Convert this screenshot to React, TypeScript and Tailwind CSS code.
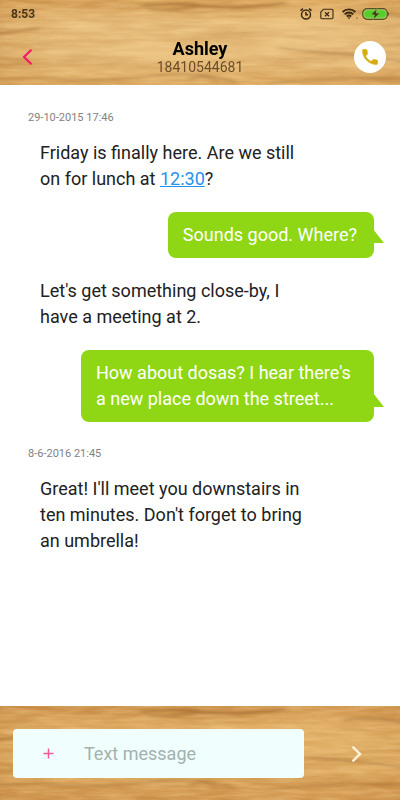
import React, { FormEvent, ReactNode, useState } from 'react';

const Wood = ({ id, light, dark }: { id: string; light: string; dark: string }) => (
  <svg
    className="absolute inset-0 h-full w-full"
    viewBox="0 0 400 94"
    preserveAspectRatio="xMidYMin slice"
    aria-hidden="true"
  >
    <defs>
      <linearGradient id={`${id}-base`} x1="0" x2="0" y1="0" y2="1">
        <stop offset="0" stopColor={dark} />
        <stop offset="0.25" stopColor={light} />
        <stop offset="0.6" stopColor={light} />
        <stop offset="1" stopColor={dark} />
      </linearGradient>
      <linearGradient id={`${id}-side`}>
        <stop offset="0" stopColor="#b97c35" stopOpacity="0.35" />
        <stop offset="0.15" stopColor="#c98d45" stopOpacity="0" />
        <stop offset="0.85" stopColor="#c98d45" stopOpacity="0" />
        <stop offset="1" stopColor="#b97c35" stopOpacity="0.15" />
      </linearGradient>
      <filter id={`${id}-grain`} x="0" y="0" width="100%" height="100%" colorInterpolationFilters="sRGB">
        <feTurbulence type="fractalNoise" baseFrequency="0.008 0.07" numOctaves="5" seed="8" />
        <feColorMatrix values="0 0 0 0 0.68  0 0 0 0 0.43  0 0 0 0 0.16  0.7 0 0 0 -0.25" />
      </filter>
      <filter id={`${id}-shine`} x="0" y="0" width="100%" height="100%" colorInterpolationFilters="sRGB">
        <feTurbulence type="fractalNoise" baseFrequency="0.03 0.25" numOctaves="4" seed="3" />
        <feColorMatrix values="0 0 0 0 1  0 0 0 0 0.88  0 0 0 0 0.64  0.6 0 0 0 -0.2" />
      </filter>
      <filter id={`${id}-soft`} x="-20%" y="-100%" width="140%" height="300%">
        <feGaussianBlur stdDeviation="3 1" />
      </filter>
    </defs>
    <rect width="400" height="94" fill={`url(#${id}-base)`} />
    <rect width="400" height="94" fill={`url(#${id}-side)`} />
    <rect width="400" height="94" filter={`url(#${id}-grain)`} />
    <rect width="400" height="94" filter={`url(#${id}-shine)`} />
    <g filter={`url(#${id}-soft)`} fill="none" stroke="#8a5424" strokeLinecap="round">
      <path d="M142 6 Q175 2 205 6 T285 3" strokeWidth="3" opacity="0.4" />
      <path d="M150 9 Q172 11 196 7" strokeWidth="3" opacity="0.3" />
      <path d="M-5 34 Q8 33 38 28" strokeWidth="2" opacity="0.4" />
      <path d="M280 48 Q310 52 340 54 T405 62" strokeWidth="2" opacity="0.35" />
      <path d="M345 14 Q375 10 405 17" strokeWidth="4" opacity="0.25" />
      <path d="M-5 81 Q20 76 60 79 T150 76 T235 82" strokeWidth="3" opacity="0.25" />
      <path d="M190 79 q15 -6 25 2" strokeWidth="3" opacity="0.3" />
      <path d="M270 84 Q320 76 405 79" strokeWidth="2" opacity="0.3" />
    </g>
  </svg>
);

const StatusIcons = () => (
  <div className="flex items-center gap-2 text-[#3a2a10]">
    <svg className="h-3 w-3" viewBox="0 0 12 12" fill="none" stroke="currentColor" strokeWidth="1.5">
      <circle cx="6" cy="6.6" r="4.5" />
      <path d="M5.9 4v2.8h2.2M.5 2.7 3 .7M11.5 2.7 9 .7" />
    </svg>
    <svg className="h-3 w-3.5" viewBox="0 0 14 12" fill="none" stroke="currentColor" strokeWidth="1.1">
      <path d="M3.6 1.2h8.2q1.2 0 1.2 1.2v7.2q0 1.2-1.2 1.2H1.9Q.8 10.8.8 9.6V4z" />
      <path d="m5 4.2 4 4m0-4-4 4" strokeWidth="1.3" />
    </svg>
    <svg className="-mr-1 h-3 w-4" viewBox="0 0 16 12" fill="none" stroke="currentColor" strokeWidth="1.8">
      <path d="M.6 4a9 9 0 0 1 12.8 0M2.7 6.3a6 6 0 0 1 8.6 0M4.8 8.5a3.2 3.2 0 0 1 4.4 0" />
      <path d="m5.5 9.5 1.5 1.7 1.5-1.7z" fill="currentColor" stroke="none" />
      <path d="M15 9v2.2" strokeWidth="0.8" opacity="0.6" />
    </svg>
    <svg className="h-3 w-[27px]" viewBox="0 0 27 12">
      <rect x="0.7" y="0.7" width="24.6" height="10.6" rx="4.5" fill="#a3c768" stroke="#57501f" strokeWidth="1.2" />
      <rect x="2.5" y="2.5" width="21" height="7" rx="3" fill="#50d028" />
      <path d="M26.3 4.5v3" stroke="#57501f" strokeWidth="1" />
      <path d="m15 .6-6 6.2h3.6L11.2 11.4l6.6-6.3H14z" fill="#3f3417" stroke="#a3c768" strokeWidth="0.5" />
    </svg>
  </div>
);

const Received = ({ children }: { children: ReactNode }) => (
  <p className="ml-3 max-w-[270px] self-start">{children}</p>
);

const Sent = ({ children }: { children: ReactNode }) => (
  <div className="relative mr-[10px] max-w-[293px] self-end rounded-lg bg-[#8fd714] py-[10px] pr-[17px] pl-[15px] text-white">
    <p>{children}</p>
    <svg className="absolute -right-[10px] bottom-[15px] h-[14px] w-[11px]" viewBox="0 0 11 14" aria-hidden="true">
      <path d="M0 0 11 14H0z" fill="#8fd714" />
    </svg>
  </div>
);

const App = () => {
  const [text, setText] = useState('');

  const handleSubmit = (e: FormEvent<HTMLFormElement>) => {
    e.preventDefault();
    setText('');
  };

  return (
    <div className="flex min-h-screen w-full flex-col bg-white font-[Roboto,sans-serif] text-[#212121]">
      <header className="relative pb-[10px]">
        <Wood id="top" light="#e8bf7d" dark="#dba75e" />
        <div className="relative flex h-7 items-center justify-between px-[11px]">
          <span className="text-xs font-bold text-[#493719]">8:53</span>
          <StatusIcons />
        </div>
        <div className="relative grid grid-cols-[1fr_auto_1fr] items-center pt-[11px]">
          <button type="button" aria-label="Back" className="ml-5 w-4 text-[#f31c66]">
            <svg className="h-4 w-4" viewBox="0 0 16 16" fill="none" stroke="currentColor" strokeWidth="2.2">
              <path d="M11.5.7 4 8l7.5 7.3" />
            </svg>
          </button>
          <div className="text-center">
            <h1 className="text-lg leading-5 font-bold text-black">Ashley</h1>
            <p className="text-sm leading-4 text-[#6b4d2a]">18410544681</p>
          </div>
          <button
            type="button"
            aria-label="Call"
            className="mr-[14px] flex h-8 w-8 items-center justify-center justify-self-end rounded-full bg-white"
          >
            <svg className="h-5 w-5" viewBox="0 0 24 24" fill="#d4ad0d" stroke="#d4ad0d" strokeWidth="0.8">
              <path d="M6.62 10.79c1.44 2.83 3.76 5.14 6.59 6.59l2.2-2.2c.27-.27.67-.36 1.02-.24 1.12.37 2.33.57 3.57.57.55 0 1 .45 1 1V20c0 .55-.45 1-1 1-9.39 0-17-7.61-17-17 0-.55.45-1 1-1h3.5c.55 0 1 .45 1 1 0 1.25.2 2.45.57 3.57.11.35.03.74-.25 1.02l-2.2 2.2z" />
            </svg>
          </button>
        </div>
      </header>

      <main className="flex flex-1 flex-col gap-6 px-4 pt-[25px] text-lg leading-[26px]">
        <section className="pl-3">
          <time className="mb-[14px] block text-[11px] leading-4 text-[#828282]">29-10-2015 17:46</time>
          <div className="flex flex-col gap-5">
            <Received>
              Friday is finally here. Are we still on for lunch at{' '}
              <a href="#event" className="text-[#2492ec] underline">12:30</a>?
            </Received>
            <Sent>Sounds good. Where?</Sent>
            <Received>Let's get something close-by, I have a meeting at 2.</Received>
            <Sent>How about dosas? I hear there's a new place down the street...</Sent>
          </div>
        </section>
        <section className="pl-3">
          <time className="mb-[14px] block text-[11px] leading-4 text-[#828282]">8-6-2016 21:45</time>
          <div className="flex flex-col">
            <Received>Great! I'll meet you downstairs in ten minutes. Don't forget to bring an umbrella!</Received>
          </div>
        </section>
      </main>

      <footer className="relative">
        <Wood id="bottom" light="#e2b067" dark="#d19750" />
        <form onSubmit={handleSubmit} className="relative flex items-center pt-[23px] pr-9 pb-[22px] pl-[13px]">
          <div className="flex h-[49px] min-w-0 flex-1 items-center rounded bg-[#f0fffd]">
            <button type="button" aria-label="Add attachment" className="ml-[30px] text-[#f05a9d]">
              <svg className="h-[11px] w-[11px]" viewBox="0 0 11 11" fill="none" stroke="currentColor" strokeWidth="1.5">
                <path d="M5.5.5v10M.5 5.5h10" />
              </svg>
            </button>
            <input
              type="text"
              aria-label="Text message"
              placeholder="Text message"
              value={text}
              onChange={(e) => setText(e.target.value)}
              className="ml-[30px] h-full min-w-0 flex-1 text-lg text-[#212121] outline-none placeholder:text-[#a3b1af]"
            />
          </div>
          <button type="submit" aria-label="Send" className="ml-11 text-[#fff0d6]">
            <svg className="h-4 w-4" viewBox="0 0 16 16" fill="none" stroke="currentColor" strokeWidth="2.5">
              <path d="M4.500.7 12 8l-7.500 7.300" />
            </svg>
          </button>
        </form>
      </footer>
    </div>
  );
};

export default App;
